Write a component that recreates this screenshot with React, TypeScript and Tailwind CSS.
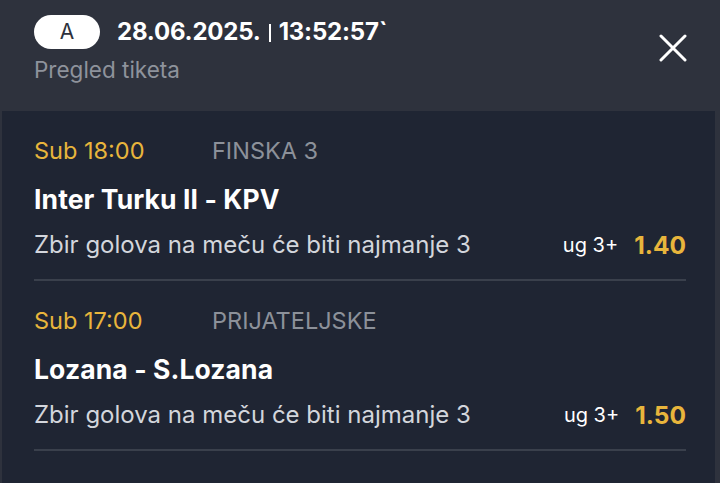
interface Bet {
  time: string;
  league: string;
  match: string;
  market: string;
  pick: string;
  odd: string;
}

const bets: Bet[] = [
  {
    time: "Sub 18:00",
    league: "FINSKA 3",
    match: "Inter Turku II - KPV",
    market: "Zbir golova na meču će biti najmanje 3",
    pick: "ug 3+",
    odd: "1.40",
  },
  {
    time: "Sub 17:00",
    league: "PRIJATELJSKE",
    match: "Lozana - S.Lozana",
    market: "Zbir golova na meču će biti najmanje 3",
    pick: "ug 3+",
    odd: "1.50",
  },
];

function CloseIcon() {
  return (
    <svg width="28" height="28" viewBox="0 0 28 28" className="mt-[20px]">
      <path d="M2 2 L26 26 M26 2 L2 26" stroke="white" strokeWidth="3" strokeLinecap="round" />
    </svg>
  );
}

function BetRow({ bet }: { bet: Bet }) {
  return (
    <div className="flex flex-col pl-8 pr-[29px] pt-[24px]">
      <div className="flex h-[32px] items-center text-[23.5px]">
        <span className="w-[178px] text-[#e8b53c]">{bet.time}</span>
        <span className="text-[#8c919a]">{bet.league}</span>
      </div>
      <div className="mt-[17px] flex h-[32px] items-center text-[26.5px] font-bold tracking-[0.1px] text-white">
        {bet.match}
      </div>
      <div className="mt-[13px] flex h-[32px] items-center justify-between">
        <span className="text-[24px] text-[#d3d6dc]">{bet.market}</span>
        <div className="flex items-center gap-[16px]">
          <span className="text-[20px] text-white">{bet.pick}</span>
          <span className="text-[24.5px] font-bold text-[#e8b53c]">{bet.odd}</span>
        </div>
      </div>
      <div className="mt-[18px] h-[2px] bg-[#3a404c]" />
    </div>
  );
}

export default function App() {
  return (
    <div
      className="flex h-[483px] w-[720px] flex-col overflow-hidden bg-[#2e323d]"
      style={{ fontFamily: "Inter, 'Noto Sans', sans-serif" }}
    >
      <header className="flex h-[111px] shrink-0 items-start justify-between pl-[34px] pr-[33px] pt-[14px]">
        <div className="flex flex-col">
          <div className="flex items-center gap-[17px]">
            <span className="flex h-[34px] w-[66px] items-center justify-center rounded-full bg-white text-[21px] text-[#2e323d]">
              A
            </span>
            <span className="flex items-center text-[24px] font-bold tracking-[-0.2px] text-white">
              28.06.2025.
              <span className="mx-[8px] mt-[2px] h-[18px] w-[2px] bg-white" />
              13:52:57`
            </span>
          </div>
          <span className="mt-[3px] text-[22.5px] text-[#8e939c]">Pregled tiketa</span>
        </div>
        <CloseIcon />
      </header>
      <main className="ml-[2px] mr-[5px] flex-1 bg-[#1f2533]">
        {bets.map((b) => (
          <BetRow key={b.match} bet={b} />
        ))}
      </main>
    </div>
  );
}
